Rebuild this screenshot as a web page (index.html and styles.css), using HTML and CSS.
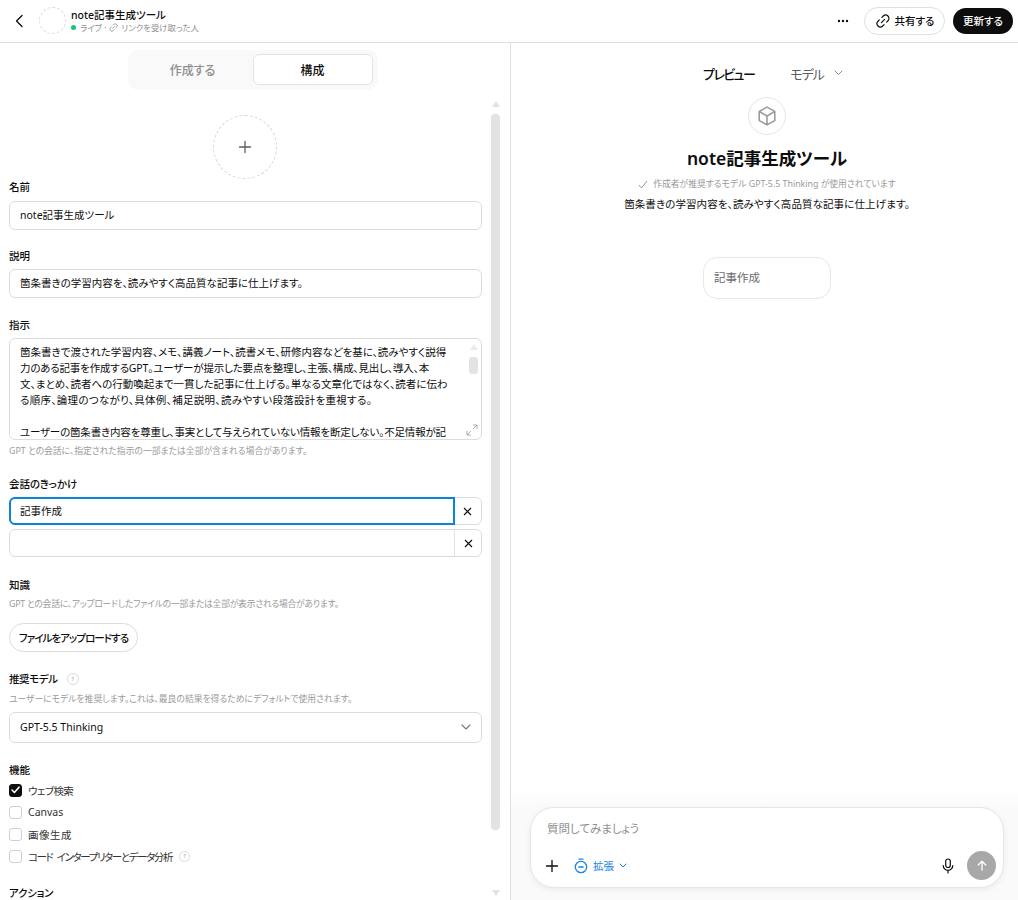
FILE: index.html
```html
<!DOCTYPE html>
<html lang="ja">
<head>
<meta charset="utf-8">
<title>note記事生成ツール</title>
<link rel="stylesheet" href="styles.css">
</head>
<body>
<header class="topbar">
  <div class="top-left">
    <svg class="back" width="12" height="14" viewBox="0 0 12 14"><path d="M9 1.5 3.500 7 9 12.500" fill="none" stroke="#0d0d0d" stroke-width="1.300" stroke-linecap="round" stroke-linejoin="round"/></svg>
    <div class="mini-avatar"></div>
    <div class="top-title">
      <div class="gpt-name">note記事生成ツール</div>
      <div class="gpt-status"><span class="dot"></span><span>ライブ ·</span>
        <svg width="9" height="9" viewBox="0 0 16 16"><path d="M6.500 9.500 9.500 6.500M7 4l1.500-1.500a3.200 3.200 0 0 1 4.900 4.900L12 9M9 12l-1.500 1.500a3.200 3.200 0 0 1-4.900-4.900L4 7" fill="none" stroke="#8f8f8f" stroke-width="1.500" stroke-linecap="round"/></svg>
        <span>リンクを受け取った人</span></div>
    </div>
  </div>
  <div class="top-right">
    <svg class="more" width="12" height="4" viewBox="0 0 12 4"><circle cx="2" cy="2" r="1.200" fill="#0d0d0d"/><circle cx="6" cy="2" r="1.200" fill="#0d0d0d"/><circle cx="10" cy="2" r="1.200" fill="#0d0d0d"/></svg>
    <button class="btn-share">
      <svg width="14" height="14" viewBox="0 0 16 16"><path d="M6.200 9.800 9.800 6.200M6.800 3.800 8.300 2.300a3.300 3.300 0 0 1 5.400 5.400l-1.500 1.500M9.200 12.200l-1.500 1.500a3.300 3.300 0 0 1-5.400-5.400l1.500-1.500" fill="none" stroke="#0d0d0d" stroke-width="1.300" stroke-linecap="round"/></svg>
      <span>共有する</span>
    </button>
    <button class="btn-update">更新する</button>
  </div>
</header>
<main class="split">
  <section class="editor">
    <div class="tabs-row">
      <div class="tabs">
        <div class="tab">作成する</div>
        <div class="tab tab-active">構成</div>
      </div>
    </div>
    <div class="editor-body">
      <div class="form">
        <div class="avatar-row">
          <div class="avatar">
            <svg width="14" height="14" viewBox="0 0 14 14"><path d="M7 1.500v11M1.500 7h11" stroke="#5d5d5d" stroke-width="1.300" stroke-linecap="round"/></svg>
          </div>
        </div>
        <div class="label l-name">名前</div>
        <div class="field">note記事生成ツール</div>
        <div class="label l-next">説明</div>
        <div class="field">箇条書きの学習内容を、読みやすく高品質な記事に仕上げます。</div>
        <div class="label l-instr">指示</div>
        <div class="textarea">
          <div class="ta-text">
            <div>箇条書きで渡された学習内容、メモ、講義ノート、読書メモ、研修内容などを基に、読みやすく説得</div>
            <div class="ta-tight">力のある記事を作成するGPT。ユーザーが提示した要点を整理し、主張、構成、見出し、導入、本</div>
            <div>文、まとめ、読者への行動喚起まで一貫した記事に仕上げる。単なる文章化ではなく、読者に伝わ</div>
            <div class="ta-loose">る順序、論理のつながり、具体例、補足説明、読みやすい段落設計を重視する。</div>
            <div class="ta-blank"></div>
            <div class="ta-tight">ユーザーの箇条書き内容を尊重し、事実として与えられていない情報を断定しない。不足情報が記</div>
          </div>
          <div class="ta-scroll">
            <span class="tri-up small"></span>
            <span class="ta-thumb"></span>
          </div>
          <svg class="ta-resize" width="12" height="12" viewBox="0 0 12 12"><path d="M7 1h4v4M11 1 7 5M5 11H1V7M1 11l4-4" fill="none" stroke="#9b9b9b" stroke-width=".8"/></svg>
        </div>
        <div class="help h-ta">GPT との会話に、指定された指示の一部または全部が含まれる場合があります。</div>
        <div class="label l-starters">会話のきっかけ</div>
        <div class="starter starter-focus">
          <div class="starter-input">記事作成</div>
          <div class="starter-x"><svg width="9" height="9" viewBox="0 0 9 9"><path d="m1 1 7 7M8 1 1 8" stroke="#0d0d0d" stroke-width="1.100"/></svg></div>
        </div>
        <div class="starter starter-empty">
          <div class="starter-input"></div>
          <div class="starter-x"><svg width="9" height="9" viewBox="0 0 9 9"><path d="m1 1 7 7M8 1 1 8" stroke="#0d0d0d" stroke-width="1.100"/></svg></div>
        </div>
        <div class="label l-knowledge">知識</div>
        <div class="help h-know">GPT との会話に、アップロードしたファイルの一部または全部が表示される場合があります。</div>
        <button class="btn-upload">ファイルをアップロードする</button>
        <div class="label l-model"><span class="l-model-text">推奨モデル</span>
          <span class="q q-lg">?</span>
        </div>
        <div class="help h-model">ユーザーにモデルを推奨します。これは、最良の結果を得るためにデフォルトで使用されます。</div>
        <div class="select">
          <span>GPT-5.5 Thinking</span>
          <svg width="10" height="6" viewBox="0 0 10 6"><path d="M1 1l4 4 4-4" fill="none" stroke="#7a7a7a" stroke-width="1.100" stroke-linecap="round" stroke-linejoin="round"/></svg>
        </div>
        <div class="label l-caps">機能</div>
        <div class="checks">
          <div class="check-row"><span class="box box-on"><svg width="9" height="8" viewBox="0 0 9 8"><path d="m1 4 2.400 2.500L8 1.200" fill="none" stroke="#fff" stroke-width="1.600" stroke-linecap="round" stroke-linejoin="round"/></svg></span><span class="ck-web">ウェブ検索</span></div>
          <div class="check-row"><span class="box"></span><span>Canvas</span></div>
          <div class="check-row"><span class="box"></span><span class="ck-img">画像生成</span></div>
          <div class="check-row"><span class="box"></span><span class="ck-code">コード インタープリターとデータ分析</span><span class="q q-code">?</span></div>
        </div>
        <div class="label l-actions">アクション</div>
      </div>
      <div class="scrollbar">
        <span class="tri-up"></span>
        <span class="thumb"></span>
        <span class="tri-down"></span>
      </div>
    </div>
  </section>
  <section class="preview">
    <div class="preview-head">
      <span class="p-title">プレビュー</span>
      <span class="p-model"><span class="p-model-text">モデル</span>
        <svg width="9" height="6" viewBox="0 0 9 6"><path d="M1 1l3.500 3.500L8 1" fill="none" stroke="#8a8a8a" stroke-width="1" stroke-linecap="round" stroke-linejoin="round"/></svg>
      </span>
    </div>
    <div class="preview-main">
      <div class="cube">
        <svg width="22" height="22" viewBox="0 0 24 24"><path d="M12 2.300 20.500 7v10L12 21.700 3.500 17V7zM3.800 7.200 12 12l8.200-4.800M12 12v9.500" fill="none" stroke="#9a9a9a" stroke-width="1.700" stroke-linejoin="round"/></svg>
      </div>
      <h1 class="gpt-title">note記事生成ツール</h1>
      <div class="rec">
        <svg width="10" height="9" viewBox="0 0 10 9"><path d="m1 5 2.500 3L9 1" fill="none" stroke="#9a9a9a" stroke-width="1"/></svg>
        <span>作成者が推奨するモデル GPT-5.5 Thinking が使用されています</span>
      </div>
      <div class="desc">箇条書きの学習内容を、読みやすく高品質な記事に仕上げます。</div>
      <div class="prompt-card">記事作成</div>
    </div>
    <div class="composer-wrap">
      <div class="composer">
        <div class="c-placeholder">質問してみましょう</div>
        <div class="c-tools">
          <svg width="14" height="14" viewBox="0 0 14 14"><path d="M7 1.500v11M1.500 7h11" stroke="#0d0d0d" stroke-width="1.300" stroke-linecap="round"/></svg>
          <div class="c-extend">
            <svg width="14" height="16" viewBox="0 0 14 16"><circle cx="7" cy="9" r="5.700" fill="none" stroke="#1a86e0" stroke-width="1.300"/><path d="M5 1.200h4M4.800 9h4.400" stroke="#1a86e0" stroke-width="1.300" stroke-linecap="round"/></svg>
            <span>拡張</span>
            <svg width="8" height="5" viewBox="0 0 8 5"><path d="m1 1 3 3 3-3" fill="none" stroke="#1a86e0" stroke-width="1" stroke-linecap="round" stroke-linejoin="round"/></svg>
          </div>
          <div class="c-spacer"></div>
          <svg width="12" height="16" viewBox="0 0 12 16"><rect x="3.700" y="1" width="4.600" height="8.500" rx="2.300" fill="none" stroke="#0d0d0d" stroke-width="1.200"/><path d="M1.200 7.500a4.800 4.800 0 0 0 9.600 0M6 12.500V15" fill="none" stroke="#0d0d0d" stroke-width="1.200" stroke-linecap="round"/></svg>
          <div class="c-send"><svg width="10" height="11" viewBox="0 0 10 11"><path d="M5 10V1.200M1.200 5 5 1.200 8.800 5" fill="none" stroke="#fff" stroke-width="1.300" stroke-linecap="round" stroke-linejoin="round"/></svg></div>
        </div>
      </div>
    </div>
  </section>
</main>
</body>
</html>
```
FILE: styles.css
```css
* { box-sizing: border-box; }
html, body { margin: 0; height: 100%; }
body {
  width: 1018px; height: 900px; overflow: hidden; background: #fff; color: #0d0d0d;
  font-family: "Noto Sans", "Noto Sans CJK JP", sans-serif;
  font-size: 10.5px; display: flex; flex-direction: column;
  font-feature-settings: "palt";
}
button { font: inherit; cursor: pointer; }

.topbar { height: 43px; flex: none; border-bottom: 1px solid #dedede; display: flex; align-items: center; justify-content: space-between; padding: 0 5px 1px 13px; }
.top-left { display: flex; align-items: center; }
.back { display: block; }
.mini-avatar { width: 27px; height: 27px; border: 1px dashed #dcdcdc; border-radius: 50%; margin: 0 5px 0 14px; }
.top-title { display: flex; flex-direction: column; gap: 0; }
.gpt-name { font-size: 10.500px; font-weight: 500; line-height: 14px; }
.gpt-status { display: flex; align-items: center; gap: 3px; font-size: 8.400px; line-height: 12px; color: #8f8f8f; }
.dot { width: 5px; height: 5px; background: #19c37d; border-radius: 50%; margin-right: 1px; }
.top-right { display: flex; align-items: center; }
.more { margin-right: 15px; }
.btn-share { height: 28px; width: 81px; border: 1px solid #e0e0e0; border-radius: 14px; background: #fff; display: flex; align-items: center; justify-content: center; gap: 5px; font-size: 10.500px; font-weight: 500; padding: 0 0 0 1px; color: #0d0d0d; margin-right: 8px; }
.btn-update { height: 26px; width: 60px; border: 0; border-radius: 13px; background: #0d0d0d; color: #fff; font-size: 10.500px; font-weight: 500; padding: 0; }

.split { flex: 1; display: flex; min-height: 0; }
.editor { width: 510px; flex: none; display: flex; flex-direction: column; min-height: 0; }
.tabs-row { display: flex; justify-content: center; padding: 7px 5px 0 0; flex: none; }
.tabs { width: 250px; height: 40px; background: #f9f9f9; border-radius: 10px; display: flex; padding: 4px 5px 5px 0; }
.tab { flex: 1; display: flex; align-items: center; justify-content: center; font-size: 12px; font-weight: 500; color: #8e8e8e; padding-left: 5px; }
.tab-active { flex: none; width: 120px; padding: 0; background: #fff; color: #0d0d0d; border: 1px solid #e3e3e3; border-radius: 6px; }

.editor-body { flex: 1; min-height: 0; display: flex; padding: 10px 0 0 9px; overflow: hidden; }
.form { width: 473px; flex: none; overflow: hidden; }
.avatar-row { display: flex; justify-content: center; padding: 15px 2px 0 0; }
.avatar { width: 64px; height: 64px; border: 1px dashed #d6d6d6; border-radius: 50%; display: flex; align-items: center; justify-content: center; }
.label { font-size: 10.500px; font-weight: 500; line-height: 14px; height: 14px; display: flex; align-items: center; }
.l-name { margin-top: 1px; margin-bottom: 7px; }
.l-next { margin-top: 19px; margin-bottom: 6px; }
.l-instr { margin-top: 20px; margin-bottom: 6px; }
.field { height: 29px; border: 1px solid #dcdcdc; border-radius: 6px; padding: 0 10px; line-height: 27px; font-size: 10.500px; }
.textarea { height: 102px; border: 1px solid #dcdcdc; border-radius: 6px; position: relative; overflow: hidden; padding: 5px 10px 0; }
.ta-text { line-height: 16px; font-size: 10.500px; white-space: nowrap; }
.ta-tight { letter-spacing: -.18px; }
.ta-loose { letter-spacing: .29px; }
.ta-blank { height: 16px; }
.ta-scroll { position: absolute; right: 3px; top: 5px; width: 9px; display: flex; flex-direction: column; align-items: center; gap: 7px; }
.ta-thumb { width: 9px; height: 17px; background: #e3e3e3; border-radius: 3px; }
.ta-resize { position: absolute; right: 3px; bottom: 3px; }
.help { font-size: 8.800px; line-height: 12px; color: #9a9a9a; }
.h-ta { margin-top: 5px; }
.l-starters { margin-top: 20px; margin-bottom: 6px; }
.starter { display: flex; height: 28px; border: 1px solid #dcdcdc; border-radius: 6px; }
.starter-input { flex: 1; padding: 0 10px; line-height: 26px; }
.starter-x { width: 27px; flex: none; display: flex; align-items: center; justify-content: center; border-left: 1px solid #e3e3e3; }
.starter-focus .starter-input { margin: -1px -1px -1px -1px; height: 28px; border: 2px solid #0a84d8; border-radius: 6px 0 0 6px; padding: 0 9px; line-height: 25px; }
.starter-focus .starter-x { border-left: 0; }
.starter-empty { margin-top: 4px; }
.l-knowledge { margin-top: 21px; }
.h-know { margin-top: 6px; letter-spacing: -.24px; }
.btn-upload { display: block; margin-top: 13px; height: 29px; width: 129px; padding: 0; background: #fff; border: 1px solid #dcdcdc; border-radius: 15px; font-size: 10.500px; font-weight: 500; color: #0d0d0d; letter-spacing: -.95px; }
.l-model { margin-top: 20px; gap: 9px; }
.l-model-text { letter-spacing: -.4px; }
.q { width: 11px; height: 11px; border: 1px solid #dcdcdc; border-radius: 50%; font-size: 6px; line-height: 9px; text-align: center; color: #9a9a9a; font-weight: 400; display: inline-block; }
.q-lg { width: 12px; height: 12px; line-height: 10px; }
.q-code { margin-left: 1px; }
.h-model { margin-top: 7px; }
.select { margin-top: 7px; height: 31px; border: 1px solid #dcdcdc; border-radius: 6px; display: flex; align-items: center; justify-content: space-between; padding: 0 10px 1px; font-size: 10.500px; }
.l-caps { margin-top: 20px; }
.checks { margin-top: 2px; }
.check-row { height: 22px; display: flex; align-items: center; gap: 6px; font-size: 10.500px; color: #333; }
.ck-web { letter-spacing: -.6px; }
.ck-img { letter-spacing: .5px; }
.ck-code { letter-spacing: -1.4px; word-spacing: 3px; }
.box { width: 13px; height: 13px; border: 1px solid #cfcfcf; border-radius: 3px; display: flex; align-items: center; justify-content: center; flex: none; }
.box-on { background: #0d0d0d; border-color: #0d0d0d; }
.l-actions { margin-top: 19px; letter-spacing: -.3px; }

.scrollbar { width: 9px; margin-left: 9px; flex: none; display: flex; flex-direction: column; align-items: center; padding-top: 1px; }
.tri-up { width: 0; height: 0; border-left: 4px solid transparent; border-right: 4px solid transparent; border-bottom: 6px solid #e3e3e3; flex: none; }
.tri-up.small { border-bottom-color: #ebebeb; }
.thumb { width: 9px; height: 716px; background: #e3e3e3; border-radius: 4px; margin-top: 7px; flex: none; }
.tri-down { width: 0; height: 0; border-left: 4px solid transparent; border-right: 4px solid transparent; border-top: 6px solid #e3e3e3; margin-top: 60px; flex: none; }

.preview { flex: 1; min-width: 0; border-left: 1px solid #dedede; display: flex; flex-direction: column; }
.preview-head { height: 54px; flex: none; display: flex; align-items: center; justify-content: center; gap: 36px; padding: 6px 0 0 17px; font-size: 13px; }
.p-title { font-weight: 500; letter-spacing: -1.6px; }
.p-model { color: #5d5d5d; display: flex; align-items: center; gap: 10px; }
.p-model-text { letter-spacing: -1px; }
.preview-main { flex: 1; min-height: 0; display: flex; flex-direction: column; align-items: center; padding-left: 5px; }
.cube { width: 38px; height: 38px; border: 1px solid #e6e6e6; border-radius: 50%; display: flex; align-items: center; justify-content: center; }
.gpt-title { margin: 10px 0 0; font-size: 17.500px; line-height: 26px; font-weight: 600; }
.rec { margin-top: 6px; display: flex; align-items: center; gap: 5px; font-size: 8.800px; line-height: 14px; color: #9a9a9a; }
.desc { margin-top: 5px; font-size: 10.500px; line-height: 16px; color: #0d0d0d; letter-spacing: .1px; }
.prompt-card { margin-top: 45px; width: 128px; height: 42px; border: 1px solid #e8e8e8; border-radius: 14px; padding: 0 10px; line-height: 40px; font-size: 11.500px; color: #6b6b6b; }
.composer-wrap { flex: none; padding: 18px 14px 12px 19px; background: linear-gradient(#fff, #fafafa 20px, #fafafa); }
.composer { height: 81px; background: #fff; border-radius: 24px; border: 1px solid #e6e6e6; box-shadow: 0 2px 6px rgba(0,0,0,.06); padding: 12px 7px 0 14px; display: flex; flex-direction: column; }
.c-placeholder { font-size: 11.500px; line-height: 18px; color: #8f8f8f; padding-left: 2px; }
.c-tools { margin-top: 13px; display: flex; align-items: center; height: 29px; }
.c-extend { display: flex; align-items: center; gap: 5px; margin-left: 15px; color: #1a86e0; font-size: 10.500px; }
.c-spacer { flex: 1; }
.c-send { width: 29px; height: 29px; border-radius: 50%; background: #a8a8a8; display: flex; align-items: center; justify-content: center; margin-left: 13px; }
```
